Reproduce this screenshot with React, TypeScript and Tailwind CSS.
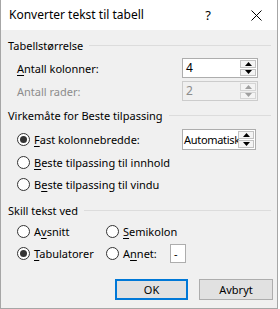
import React from "react";

const U = ({ children }: { children: React.ReactNode }) => (
  <span className="underline decoration-1 underline-offset-[2px]">{children}</span>
);

function Radio({ checked }: { checked?: boolean }) {
  return (
    <span className="w-[13px] h-[13px] rounded-full border border-[#333333] bg-white flex items-center justify-center shrink-0">
      {checked && <span className="w-[7px] h-[7px] rounded-full bg-[#333333]" />}
    </span>
  );
}

function Arrow({ up, disabled }: { up?: boolean; disabled?: boolean }) {
  const c = disabled ? "#a0a0a0" : "#000000";
  return (
    <svg width="7" height="4" viewBox="0 0 7 4">
      {up ? <polygon points="0,4 7,4 3.5,0" fill={c} /> : <polygon points="0,0 7,0 3.5,4" fill={c} />}
    </svg>
  );
}

function Spin({ disabled }: { disabled?: boolean }) {
  const cls = disabled ? "border-[#d5d5d5] bg-[#f4f4f4]" : "border-[#c2c2c2] bg-[#f4f4f4]";
  return (
    <div className="flex flex-col w-[17px] h-full py-px pr-px gap-px shrink-0">
      <div className={`flex-1 flex items-center justify-center border ${cls}`}>
        <Arrow up disabled={disabled} />
      </div>
      <div className={`flex-1 flex items-center justify-center border ${cls}`}>
        <Arrow disabled={disabled} />
      </div>
    </div>
  );
}

function Heading({ text, mt }: { text: string; mt: string }) {
  return (
    <div className={`flex items-center h-[16px] pl-[7px] pr-[6px] ${mt}`}>
      <span className="whitespace-nowrap">{text}</span>
      <div className="flex-1 h-px bg-[#dcdcdc] ml-[6px]" />
    </div>
  );
}

export default function App() {
  return (
    <div className="w-[280px] h-[309px] bg-white" style={{ fontFamily: '"Noto Sans", sans-serif' }}>
      <div className="w-[278px] h-[309px] flex flex-col bg-[#f0f0f0] border-l border-r border-b border-[#a6a6a6] text-[11px] text-black leading-none">
        {/* Title bar */}
        <div className="h-[30px] bg-white flex items-center shrink-0">
          <span className="pl-[8px] text-[12px]">Konverter tekst til tabell</span>
          <span className="ml-auto text-[13px] mr-[40px]">?</span>
          <svg width="11" height="11" viewBox="0 0 11 11" className="mr-[15px]">
            <path d="M0.5 0.5 L10.5 10.5 M10.5 0.5 L0.5 10.5" stroke="#000" strokeWidth="1" />
          </svg>
        </div>

        <Heading text="Tabellstørrelse" mt="mt-[7px]" />

        <div className="flex items-center h-[20px] mt-[5px] pl-[16px]">
          <span>
            <U>A</U>ntall kolonner:
          </span>
          <div className="ml-auto mr-[19px] w-[76px] h-[20px] bg-white border border-[#adadad] flex">
            <span className="flex-1 flex items-center pl-[3px] text-[12px]">4</span>
            <Spin />
          </div>
        </div>

        <div className="flex items-center h-[20px] mt-[3px] pl-[16px] text-[#8c8c8c]">
          <span>Antall rader:</span>
          <div className="ml-auto mr-[19px] w-[76px] h-[20px] bg-[#f0f0f0] border border-[#cccccc] flex">
            <span className="flex-1 flex items-center pl-[3px] text-[12px]">2</span>
            <Spin disabled />
          </div>
        </div>

        <Heading text="Virkemåte for Beste tilpassing" mt="mt-[6px]" />

        <div className="flex items-center h-[22px] mt-[5px] pl-[16px]">
          <Radio checked />
          <span className="ml-[4px]">
            <U>F</U>ast kolonnebredde:
          </span>
          <div className="ml-auto mr-[21px] w-[74px] h-[21px] bg-white border border-[#adadad] flex overflow-hidden">
            <span className="flex-1 min-w-0 flex items-center pl-[1px] whitespace-nowrap tracking-[-0.3px]">Automatisk</span>
            <Spin />
          </div>
        </div>

        <div className="flex items-center h-[22px] mt-[1px] pl-[16px]">
          <Radio />
          <span className="ml-[4px]">
            <U>B</U>este tilpassing til innhold
          </span>
        </div>

        <div className="flex items-center h-[22px] pl-[16px]">
          <Radio />
          <span className="ml-[4px]">
            B<U>e</U>ste tilpassing til vindu
          </span>
        </div>

        <Heading text="Skill tekst ved" mt="mt-[7px]" />

        <div className="flex items-center h-[22px] mt-[2px] pl-[16px]">
          <div className="flex items-center w-[89px]">
            <Radio />
            <span className="ml-[4px]">
              A<U>v</U>snitt
            </span>
          </div>
          <div className="flex items-center">
            <Radio />
            <span className="ml-[4px]">
              <U>S</U>emikolon
            </span>
          </div>
        </div>

        <div className="flex items-center h-[22px] pl-[16px]">
          <div className="flex items-center w-[89px]">
            <Radio checked />
            <span className="ml-[4px]">
              <U>T</U>abulatorer
            </span>
          </div>
          <div className="flex items-center w-[64px]">
            <Radio />
            <span className="ml-[4px]">
              A<U>n</U>net:
            </span>
          </div>
          <div className="w-[16px] h-[19px] bg-white border border-[#adadad] flex items-center pl-[3px]">-</div>
        </div>

        <div className="flex mt-[15px] h-[21px] pl-[114px] gap-[11px]">
          <button className="w-[73px] h-[21px] bg-[#e1e1e1] border-2 border-[#0078d7] flex items-center justify-center">
            OK
          </button>
          <button className="w-[74px] h-[21px] bg-[#e1e1e1] border border-[#adadad] flex items-center justify-center">
            Avbryt
          </button>
        </div>
      </div>
    </div>
  );
}
